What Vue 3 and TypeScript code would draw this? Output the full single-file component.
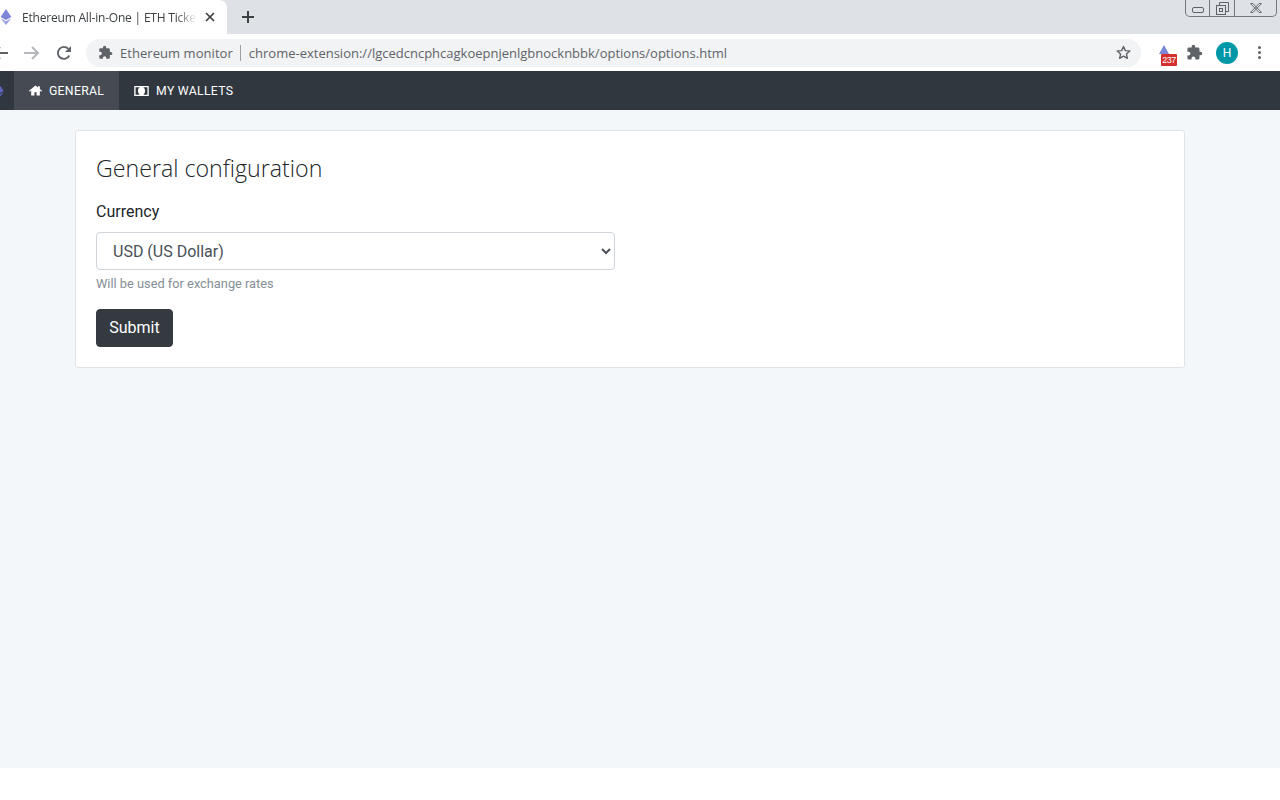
<script setup lang="ts">
import { ref } from 'vue';

const currency = ref('USD');
const currencies = [
  { code: 'USD', label: 'USD (US Dollar)' },
  { code: 'EUR', label: 'EUR (Euro)' },
  { code: 'GBP', label: 'GBP (British Pound)' }
];
const activeTab = ref('general');
</script>

<template>
  <div class="screen">
    <div class="tab-strip">
      <div class="tab">
        <svg class="favicon" viewBox="0 0 12 18" width="12" height="16">
          <path d="M6 0 0 9l6 3.400L12 9z" fill="#7c85d8" />
          <path d="M0 10.400 6 18l6-7.600-6 3.400z" fill="#9aa2e6" />
        </svg>
        <span class="tab-title">Ethereum All-in-One | ETH Ticker</span>
        <svg class="tab-close" viewBox="0 0 10 10" width="10" height="10">
          <path d="M1 1l8 8M9 1 1 9" stroke="#3c4043" stroke-width="1.700" />
        </svg>
      </div>
      <svg class="new-tab" viewBox="0 0 12 12" width="12" height="12">
        <path d="M6 0v12M0 6h12" stroke="#3c4043" stroke-width="2" />
      </svg>
      <div class="window-controls">
        <div class="win-btn win-min"><span class="min-glyph"></span></div>
        <div class="win-btn win-max">
          <svg viewBox="0 0 13 13" width="13" height="13" fill="none" stroke="#5f6368">
            <path d="M3.500 3V.500h9v9H10" />
            <rect x="0.500" y="3.500" width="9" height="9" />
            <rect x="3.500" y="6.500" width="3" height="3" />
          </svg>
        </div>
        <div class="win-btn win-close">
          <svg viewBox="0 0 12 10" width="12" height="10" fill="none" stroke="#6b6f73">
            <path d="M0.500 0.500h2.500L11.500 9.500H9zM11.500 0.500H9L0.500 9.500H3z" />
          </svg>
        </div>
      </div>
    </div>

    <div class="toolbar">
      <svg class="nav-back" viewBox="0 0 16 16" width="16" height="16">
        <path d="M16 8H2M8 2 2 8l6 6" fill="none" stroke="#5f6368" stroke-width="2" />
      </svg>
      <svg class="nav-forward" viewBox="0 0 16 16" width="16" height="16">
        <path d="M0 8h14M8 2l6 6-6 6" fill="none" stroke="#b4b7bb" stroke-width="2" />
      </svg>
      <svg class="nav-reload" viewBox="0 0 16 16" width="16" height="16">
        <path d="M13.300 10.500A6 6 0 1 1 12.300 3.800" fill="none" stroke="#5f6368" stroke-width="1.900" />
        <path d="M15 1v6H9z" fill="#5f6368" />
      </svg>
      <div class="omnibox">
        <svg class="puzzle small" viewBox="0 0 24 24" width="15" height="15">
          <path d="M20.500 11H19V7a2 2 0 0 0-2-2h-4V3.500a2.500 2.500 0 0 0-5 0V5H4a2 2 0 0 0-2 2v3.800h1.500a2.700 2.700 0 0 1 0 5.400H2V20a2 2 0 0 0 2 2h3.800v-1.500a2.700 2.700 0 0 1 5.400 0V22H17a2 2 0 0 0 2-2v-4h1.500a2.500 2.500 0 0 0 0-5z" fill="#5f6368" />
        </svg>
        <span class="site-name">Ethereum monitor</span>
        <span class="omni-sep"></span>
        <span class="url">chrome-extension://lgcedcncphcagkoepnjenlgbnocknbbk/options/options.html</span>
        <svg class="star" viewBox="0 0 24 24" width="17" height="17">
          <path d="M12 3.500l2.600 5.800 6.300.6-4.800 4.200 1.400 6.200L12 17.100l-5.500 3.200 1.400-6.200-4.800-4.200 6.300-.6z" fill="none" stroke="#5f6368" stroke-width="2" stroke-linejoin="round" />
        </svg>
      </div>
      <div class="ext-ticker">
        <svg viewBox="0 0 10 9" width="10" height="9" class="ext-eth">
          <path d="M5 0 0 9h10z" fill="#7c85d8" />
        </svg>
        <span class="ext-badge">237</span>
      </div>
      <svg class="puzzle" viewBox="0 0 24 24" width="17" height="17">
        <path d="M20.500 11H19V7a2 2 0 0 0-2-2h-4V3.500a2.500 2.500 0 0 0-5 0V5H4a2 2 0 0 0-2 2v3.800h1.500a2.700 2.700 0 0 1 0 5.400H2V20a2 2 0 0 0 2 2h3.800v-1.500a2.700 2.700 0 0 1 5.400 0V22H17a2 2 0 0 0 2-2v-4h1.500a2.500 2.500 0 0 0 0-5z" fill="#5f6368" />
      </svg>
      <div class="avatar">H</div>
      <div class="menu-dots"><i></i><i></i><i></i></div>
    </div>

    <nav class="navbar">
      <svg class="brand-eth" viewBox="0 0 12 18" width="10" height="14">
        <path d="M6 0 0 9l6 3.400L12 9z" fill="#5f68c4" />
        <path d="M0 10.400 6 18l6-7.600-6 3.400z" fill="#5f68c4" />
      </svg>
      <a class="nav-link" :class="{ active: activeTab === 'general' }">
        <svg viewBox="0 0 18 14" width="13" height="11">
          <path d="M9 0 0 7.500l1 1.200L3 7v7h4.500V9.500h3V14H15V7l2 1.700 1-1.200-3-2.500V1h-2.500v1.900z" fill="#fff" />
        </svg>
        GENERAL
      </a>
      <a class="nav-link" :class="{ active: activeTab === 'wallets' }">
        <svg viewBox="0 0 16 11" width="15" height="10">
          <path fill-rule="evenodd" d="M0 0h16v11H0zm1.500 1.500v8H6a5 5 0 0 1 0-8zm8.500 0a5 5 0 0 1 0 8h4.500v-8z" fill="#fff" />
        </svg>
        MY WALLETS
      </a>
    </nav>

    <main class="content">
      <section class="card">
        <h4 class="card-title">General configuration</h4>
        <form class="config-form" @submit.prevent>
          <label class="field-label" for="currency">Currency</label>
          <select id="currency" v-model="currency" class="field-select">
            <option v-for="c in currencies" :key="c.code" :value="c.code">{{ c.label }}</option>
          </select>
          <small class="field-hint">Will be used for exchange rates</small>
          <button type="submit" class="btn-submit">Submit</button>
        </form>
      </section>
    </main>
  </div>
</template>

<style scoped>
.screen {
  width: 1280px;
  height: 800px;
  display: flex;
  flex-direction: column;
  overflow: hidden;
  background: #ffffff;
  font-family: Roboto, "Liberation Sans", sans-serif;
}

.tab-strip {
  height: 34px;
  flex: none;
  display: flex;
  background: #dee1e6;
}
.tab {
  width: 227px;
  height: 34px;
  flex: none;
  display: flex;
  align-items: center;
  background: #ffffff;
  border-top-right-radius: 8px;
}
.favicon { flex: none; }
.tab-title {
  width: 175px;
  margin-left: 10px;
  font: 12px "Open Sans", sans-serif;
  letter-spacing: -0.2px;
  color: #3c4043;
  white-space: nowrap;
  overflow: hidden;
  -webkit-mask-image: linear-gradient(to right, #000 88%, transparent);
  mask-image: linear-gradient(to right, #000 88%, transparent);
}
.tab-close { margin-left: 8px; flex: none; }
.new-tab { margin: 11px 0 0 15px; flex: none; }

.window-controls {
  display: flex;
  height: 17px;
  margin-left: auto;
  margin-right: 3px;
  border: 1px solid #75787c;
  border-top: none;
  border-radius: 0 0 5px 5px;
  box-sizing: border-box;
  width: 92px;
}
.win-btn {
  display: flex;
  align-items: center;
  justify-content: center;
  box-sizing: border-box;
  border-right: 1px solid #75787c;
}
.win-min { width: 24px; }
.win-max { width: 25px; }
.win-close { flex: 1; border-right: none; }
.min-glyph {
  display: block;
  width: 10px;
  height: 4px;
  margin-top: 4px;
  border: 1px solid #5f6368;
  border-radius: 2px;
}

.toolbar {
  height: 37px;
  flex: none;
  display: flex;
  align-items: center;
  background: #ffffff;
}
.nav-back { margin-left: -8px; flex: none; }
.nav-forward { margin-left: 16px; flex: none; }
.nav-reload { margin-left: 16px; flex: none; }
.omnibox {
  width: 1055px;
  height: 28px;
  margin-left: 14px;
  flex: none;
  display: flex;
  align-items: center;
  border-radius: 14px;
  background: #f1f3f4;
  box-sizing: border-box;
  padding-left: 12px;
}
.site-name {
  margin-left: 7px;
  font: 13px "Open Sans", sans-serif;
  letter-spacing: 0.05px;
  color: #5f6368;
  white-space: nowrap;
}
.omni-sep {
  width: 1px;
  height: 16px;
  margin-left: 7px;
  background: #9aa0a6;
}
.url {
  margin-left: 8px;
  font: 13px "Open Sans", sans-serif;
  color: #5f6368;
  white-space: nowrap;
}
.star { margin-left: auto; margin-right: 9px; flex: none; }
.ext-ticker {
  position: relative;
  width: 18px;
  height: 24px;
  margin-left: 18px;
  flex: none;
}
.ext-eth { position: absolute; left: 0; top: 4px; }
.ext-badge {
  position: absolute;
  left: 2px;
  top: 13px;
  width: 16px;
  height: 12px;
  border-radius: 1px;
  background: #d32f2f;
  color: #ffffff;
  font: 9px/12px "Liberation Sans", sans-serif;
  text-align: center;
  letter-spacing: -0.5px;
}
.puzzle { margin-left: 9px; flex: none; }
.puzzle.small { margin-left: 0; }
.avatar {
  width: 22px;
  height: 22px;
  margin-left: 13px;
  flex: none;
  border-radius: 50%;
  background: #0097a7;
  color: #ffffff;
  font: 12px/22px Roboto, sans-serif;
  text-align: center;
}
.menu-dots {
  margin-left: 20px;
  display: flex;
  flex-direction: column;
  gap: 2px;
}
.menu-dots i {
  display: block;
  width: 3px;
  height: 3px;
  border-radius: 50%;
  background: #5f6368;
}

.navbar {
  height: 39px;
  flex: none;
  display: flex;
  align-items: stretch;
  background: #31373f;
}
.brand-eth { margin: 13px 10px 0 -6px; flex: none; }
.nav-link {
  display: flex;
  align-items: center;
  gap: 7px;
  padding: 0 15px;
  color: #ffffff;
  font-size: 12.250px;
  letter-spacing: 0.28px;
  white-space: nowrap;
}
.nav-link.active { background: #464b53; }

.content {
  height: 658px;
  flex: none;
  box-sizing: border-box;
  padding: 20px 95px 0 75px;
  background: #f4f7fa;
}
.card {
  height: 238px;
  box-sizing: border-box;
  padding: 20px;
  background: #ffffff;
  border: 1px solid #dfe3e8;
  border-radius: 3px;
}
.card-title {
  margin: 0 0 15px;
  font: 300 23.200px/34px "Open Sans", sans-serif;
  color: #212529;
}
.config-form {
  display: flex;
  flex-direction: column;
  align-items: flex-start;
}
.field-label {
  font-size: 16px;
  line-height: 24px;
  color: #212529;
  margin-bottom: 8px;
}
.field-select {
  width: 519px;
  height: 38px;
  padding: 6px 12px;
  background: #ffffff;
  border: 1px solid #ced4da;
  border-radius: 4px;
  font: 16px Roboto, sans-serif;
  color: #495057;
}
.field-hint {
  margin-top: 4px;
  font-size: 12.800px;
  line-height: 19px;
  color: #868e96;
}
.btn-submit {
  margin-top: 16px;
  height: 38px;
  width: 77px;
  padding: 0 0 2px;
  background: #343a40;
  border: 1px solid #343a40;
  border-radius: 4px;
  font: 16px Roboto, sans-serif;
  color: #ffffff;
}
</style>
